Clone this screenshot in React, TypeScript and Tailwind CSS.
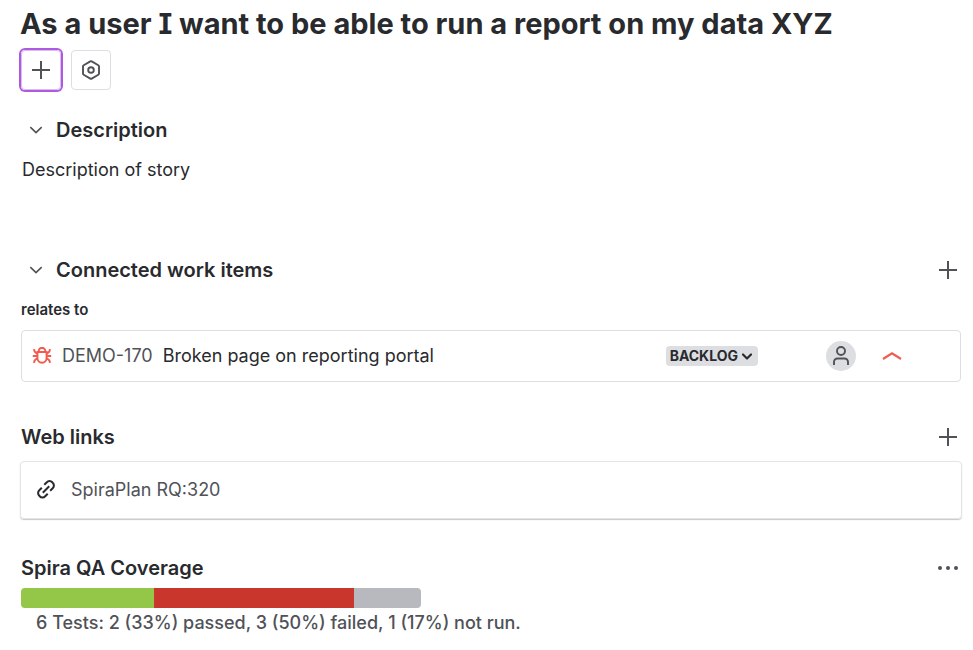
import type { ReactNode } from "react";

function PlusIcon() {
  return (
    <svg className="size-5" viewBox="0 0 20 20" fill="none" stroke="#505258" strokeWidth="2" aria-hidden="true">
      <path d="M10 1v18M1 10h18" />
    </svg>
  );
}

function HexIcon() {
  return (
    <svg className="size-5" viewBox="0 0 20 20" fill="none" stroke="#505258" strokeWidth="1.9" aria-hidden="true">
      <path d="M9.3 1.4 2.7 5.2q-.7.4-.7 1.2v7.2q0 .8.7 1.2l6.6 3.8q.7.4 1.4 0l6.6-3.8q.7-.4.7-1.2V6.4q0-.8-.7-1.2l-6.6-3.8q-.7-.4-1.4 0Z" />
      <circle cx="10" cy="10" r="2.8" />
    </svg>
  );
}

function ChevronIcon() {
  return (
    <svg className="h-2 w-3.5" viewBox="0 0 14 8" fill="none" stroke="#505258" strokeWidth="1.6" aria-hidden="true">
      <path d="m1.3 1.2 5.7 5.5 5.7-5.5" />
    </svg>
  );
}

function BugIcon() {
  return (
    <svg className="size-5 shrink-0" viewBox="0 0 20 20" fill="none" stroke="#f15b50" strokeWidth="2" role="img" aria-label="Bug">
      <path d="M5.4 6h9.2v6a4.600 4.800 0 0 1-9.200 0Z" />
      <path d="M6.800 6V4.600A2.500 2.500 0 0 1 9.300 2.100h1.400a2.500 2.500 0 0 1 2.500 2.500V6M5.400 10H.8M14.600 10h4.600M5.400 7.600 3.700 6.700Q2.300 6 2 3.200M14.600 7.600l1.700-.9Q17.700 6 18 3.200M5.600 12.400l-1.900.9Q2.300 14 2 16.800M14.400 12.400l1.900.9q1.400.7 1.700 3.500" />
    </svg>
  );
}

function LinkIcon() {
  return (
    <svg className="size-5 shrink-0" viewBox="0 0 20 20" fill="none" stroke="#292a2e" strokeWidth="2" aria-hidden="true">
      <path d="m8.300 4.800 2.500-2.500a3.750 3.750 0 0 1 5.500 0l.4.4a3.750 3.750 0 0 1 0 5.500l-2.500 2.500M11.700 13.700l-2.500 2.500a3.750 3.750 0 0 1-5.500 0l-.4-.4a3.750 3.750 0 0 1 0-5.500l2.500-2.500M6.800 12.700l6.400-6.400" />
    </svg>
  );
}

function PersonIcon() {
  return (
    <svg className="size-5" viewBox="0 0 20 20" fill="none" stroke="#505258" strokeWidth="1.9" role="img" aria-label="Unassigned">
      <circle cx="10" cy="5" r="4" />
      <path d="M3 19v-3a3.500 3.500 0 0 1 3.500-3.500h7A3.500 3.500 0 0 1 17 16v3" />
    </svg>
  );
}

function Heading({ children }: { children: ReactNode }) {
  return <h2 className="text-xl leading-6 font-semibold">{children}</h2>;
}

function IconButton({ label, children }: { label: string; children: ReactNode }) {
  return (
    <button type="button" aria-label={label} className="flex size-6 items-center justify-center">
      {children}
    </button>
  );
}

const results = [
  { name: "passed", share: 2, color: "bg-[#94c748]" },
  { name: "failed", share: 3, color: "bg-[#c9372c]" },
  { name: "not run", share: 1, color: "bg-[#b7b9be]" },
];

export default function App() {
  return (
    <main className="bg-white pr-[11px] pb-3 pl-5 font-['Inter','Liberation_Sans',sans-serif] text-lg text-[#292a2e] [font-feature-settings:'cv08']">
      <h1 className="pt-1 text-[29px] leading-10 font-bold">As a user I want to be able to run a report on my data XYZ</h1>

      <div className="mt-1.5 flex gap-2.5 pl-px">
        <button type="button" aria-label="Add" className="flex size-10 items-center justify-center rounded-sm border border-[#d9bdea] ring-2 ring-[#af59e1]">
          <PlusIcon />
        </button>
        <button type="button" aria-label="Apps" className="flex size-10 items-center justify-center rounded-sm border border-[#dddee1]">
          <HexIcon />
        </button>
      </div>

      <section className="mt-7">
        <div className="flex items-center">
          <button type="button" aria-label="Collapse description" className="flex h-6 w-8 items-center justify-center">
            <ChevronIcon />
          </button>
          <div className="pl-1">
            <Heading>Description</Heading>
          </div>
        </div>
        <p className="mt-4 pl-0.5 leading-6">Description of story</p>
      </section>

      <section className="mt-19">
        <div className="flex items-center pr-0.5">
          <button type="button" aria-label="Collapse connected work items" className="flex h-6 w-8 items-center justify-center">
            <ChevronIcon />
          </button>
          <div className="flex-1 pl-1">
            <Heading>Connected work items</Heading>
          </div>
          <IconButton label="Add connected work item">
            <PlusIcon />
          </IconButton>
        </div>
        <h3 className="mt-4 pl-px text-[15px] leading-6 font-semibold">relates to</h3>
        <div className="mt-2 mr-px ml-px flex h-13 items-center rounded-sm border border-[#dddee1] pl-2.5">
          <BugIcon />
          <a href="#demo-170" className="ml-2.5 text-[#505258]">DEMO-170</a>
          <span className="ml-2.5 flex-1">Broken page on reporting portal</span>
          <button type="button" className="flex h-5 items-center gap-1 rounded-sm bg-[#dddee1] pr-1.5 pl-1 text-sm leading-5 font-bold">
            BACKLOG
            <svg className="size-2.5" viewBox="0 0 10 10" fill="none" stroke="currentColor" strokeWidth="2.2" strokeLinecap="round" strokeLinejoin="round" aria-hidden="true">
              <path d="m1 3.500 4 4 4-4" />
            </svg>
          </button>
          <span className="ml-17 flex size-7.5 items-center justify-center rounded-full bg-[#dddee1]">
            <PersonIcon />
          </span>
          <svg className="mr-14.5 ml-6.5 h-2.5 w-5" viewBox="0 0 20 10" fill="none" stroke="#f15b50" strokeWidth="2.2" role="img" aria-label="High priority">
            <path d="m1 8 9-5.600 9 5.600" />
          </svg>
        </div>
      </section>

      <section className="mt-[43px]">
        <div className="flex items-center justify-between pr-0.5 pl-px">
          <Heading>Web links</Heading>
          <IconButton label="Add web link">
            <PlusIcon />
          </IconButton>
        </div>
        <div className="mt-3 flex h-14.5 items-center gap-[15px] rounded-sm border border-[#e4e4e6] pl-[15px] shadow-[0_1px_1px_#1e1f2140]">
          <LinkIcon />
          <a href="#rq-320" className="text-[#505258]">SpiraPlan RQ:320</a>
        </div>
      </section>

      <section className="mt-[37px] pl-px">
        <div className="flex items-center justify-between pr-0.5">
          <Heading>Spira QA Coverage</Heading>
          <IconButton label="More actions">
            <svg className="h-5 w-6" viewBox="0 0 24 20" fill="#505258" aria-hidden="true">
              <circle cx="4" cy="10" r="2" />
              <circle cx="12" cy="10" r="2" />
              <circle cx="20" cy="10" r="2" />
            </svg>
          </IconButton>
        </div>
        <div className="mt-2 flex h-5 w-full max-w-100 overflow-hidden rounded-sm">
          {results.map((r) => (
            <div key={r.name} className={r.color} style={{ flexGrow: r.share, flexBasis: 0 }} />
          ))}
        </div>
        <p className="mt-[3px] pl-[15px] leading-6 font-medium text-[#505258]">6 Tests: 2 (33%) passed, 3 (50%) failed, 1 (17%) not run.</p>
      </section>
    </main>
  );
}
